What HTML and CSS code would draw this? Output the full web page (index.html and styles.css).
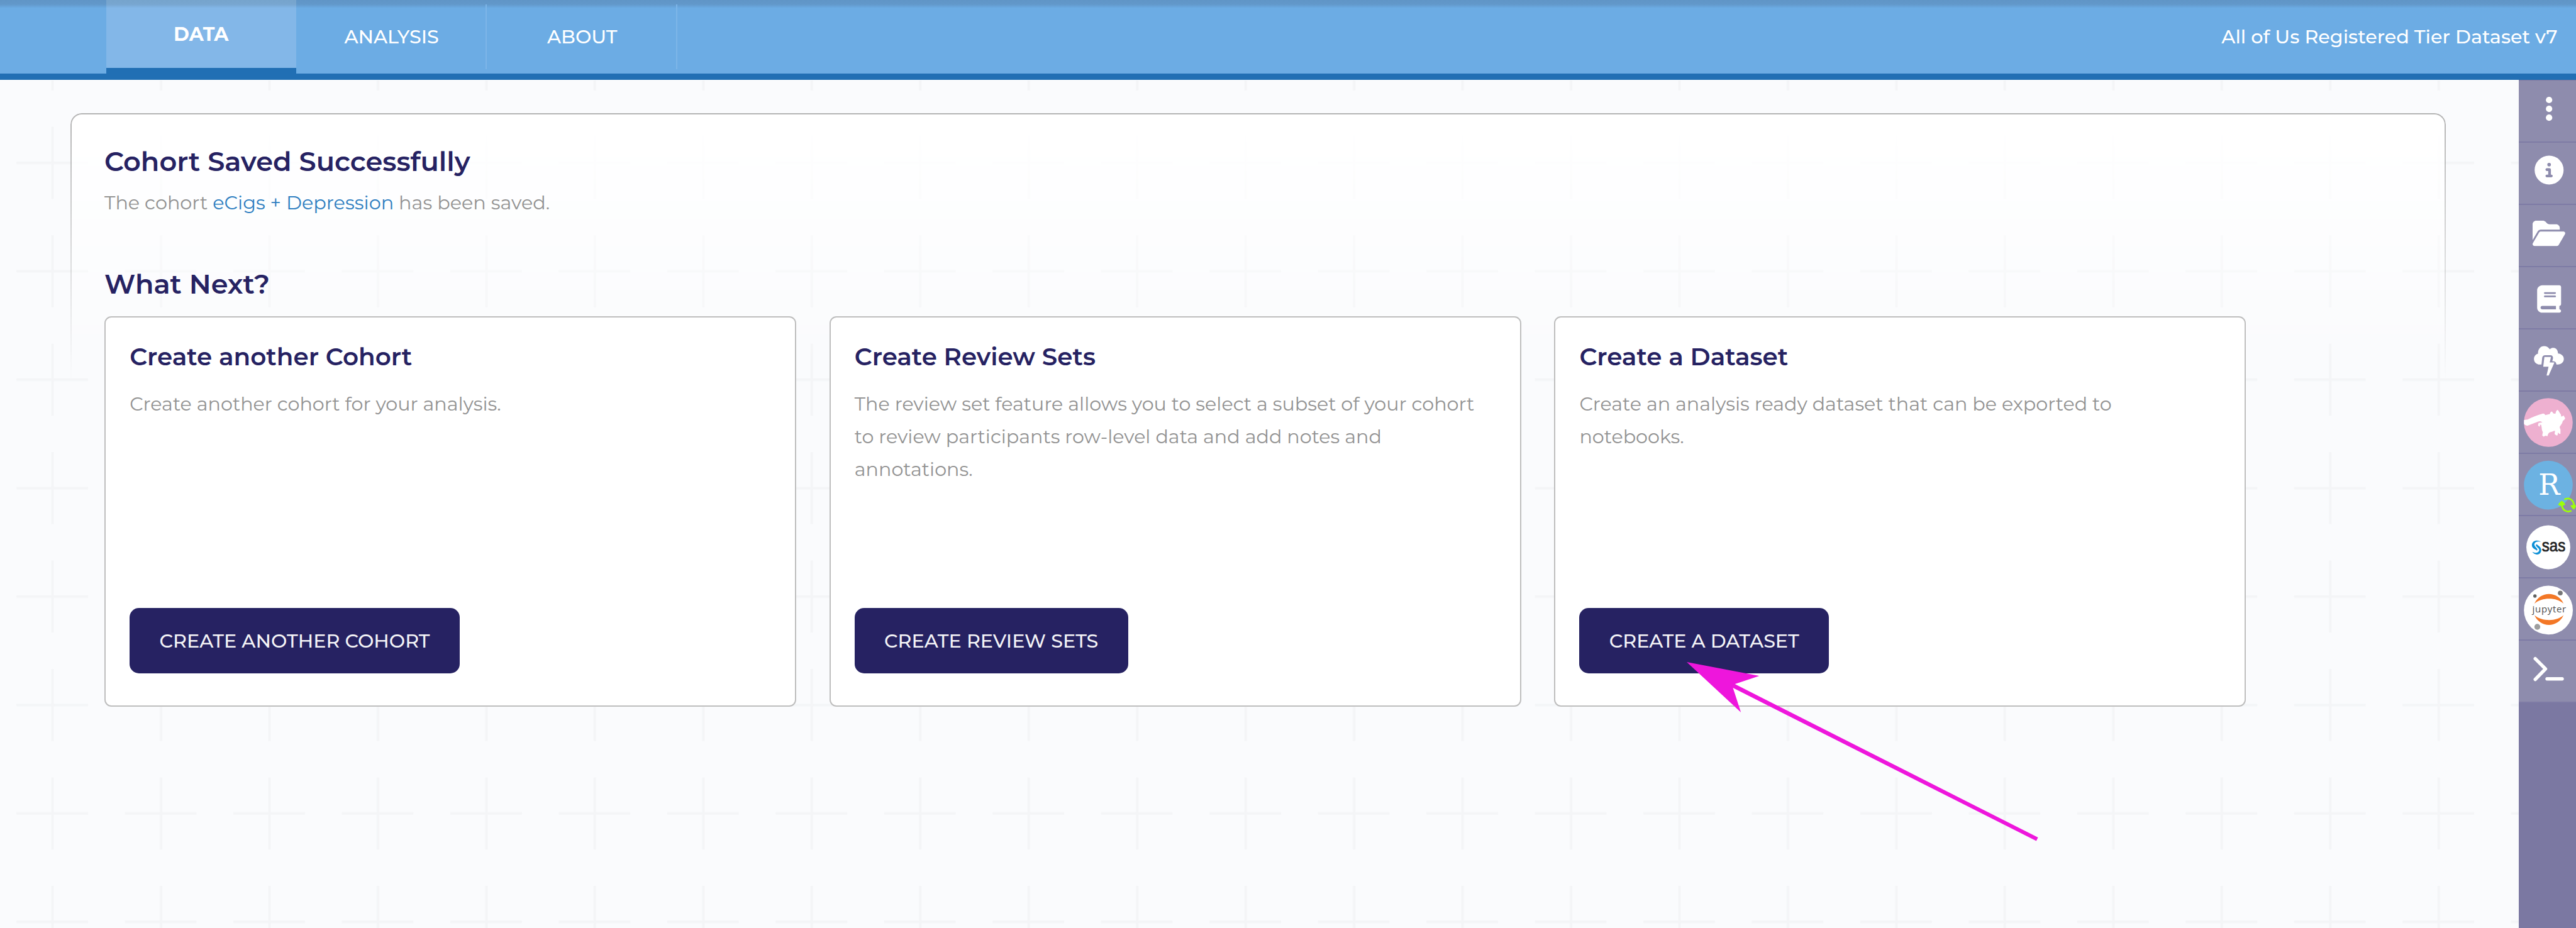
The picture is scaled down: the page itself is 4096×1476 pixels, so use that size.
FILE: index.html
```html
<!DOCTYPE html>
<html lang="en">
<head>
<meta charset="utf-8">
<title>Cohort Saved</title>
<link rel="stylesheet" href="styles.css">
</head>
<body>
<header class="topbar">
  <nav class="tabs">
    <a class="tab tab-active">DATA</a>
    <a class="tab">ANALYSIS</a>
    <a class="tab">ABOUT</a>
  </nav>
  <div class="dataset">All of Us Registered Tier Dataset v7</div>
</header>
<div class="body">
  <main class="main">
    <svg class="grid" width="100%" height="100%" aria-hidden="true">
      <defs>
        <pattern id="cross" x="-2.6" y="44.8" width="172.46" height="172.46" patternUnits="userSpaceOnUse">
          <path d="M86.2 29V143.5M28.6 86.2H142.6" stroke="#f4f5f7" stroke-width="4" fill="none"/>
        </pattern>
      </defs>
      <rect width="100%" height="100%" fill="url(#cross)"/>
    </svg>
    <section class="panel">
      <h1 class="heading">Cohort Saved Successfully</h1>
      <p class="saved">The cohort <a class="link">eCigs + Depression</a> has been saved.</p>
      <h2 class="heading next">What Next?</h2>
      <div class="cards">
        <article class="card">
          <h3 class="card-title">Create another Cohort</h3>
          <p class="card-text">Create another cohort for your analysis.</p>
          <button class="button">CREATE ANOTHER COHORT</button>
        </article>
        <article class="card">
          <h3 class="card-title">Create Review Sets</h3>
          <p class="card-text">The review set feature allows you to select a subset of your cohort<br>to review participants row-level data and add notes and<br>annotations.</p>
          <button class="button">CREATE REVIEW SETS</button>
        </article>
        <article class="card">
          <h3 class="card-title">Create a Dataset</h3>
          <p class="card-text">Create an analysis ready dataset that can be exported to<br>notebooks.</p>
          <button class="button">CREATE A DATASET</button>
        </article>
      </div>
    </section>
  </main>
  <aside class="sidebar">
    <div class="tool">
      <svg viewBox="0 0 91 97"><g fill="#fff"><circle cx="48.2" cy="31" r="5.1"/><circle cx="48.2" cy="45.1" r="5.1"/><circle cx="48.2" cy="59.2" r="5.1"/></g></svg>
    </div>
    <div class="tool">
      <svg viewBox="0 0 91 97"><path transform="translate(25.2 20.4) scale(.09)" fill="#fff" d="M256 512A256 256 0 1 0 256 0a256 256 0 1 0 0 512zM216 336h24V272H216c-13.3 0-24-10.7-24-24s10.7-24 24-24h48c13.3 0 24 10.7 24 24v88h8c13.3 0 24 10.7 24 24s-10.7 24-24 24H216c-13.3 0-24-10.7-24-24s10.7-24 24-24zm40-208a32 32 0 1 1 0 64 32 32 0 1 1 0-64z"/></svg>
    </div>
    <div class="tool">
      <svg viewBox="0 0 91 97"><path transform="translate(22 22) scale(.09)" fill="#fff" d="M88.700 223.800L0 375.800V96C0 60.700 28.700 32 64 32H181.500c17 0 33.300 6.700 45.300 18.700l26.500 26.500c12 12 28.300 18.700 45.300 18.700H416c35.300 0 64 28.700 64 64v32H144c-22.800 0-43.800 12.100-55.300 31.800zm27.600 16.100C122.100 230 132.600 224 144 224H544c11.500 0 22 6.100 27.700 16.100s5.700 22.200-.1 32.100l-112 192C453.900 474 443.400 480 432 480H32c-11.500 0-22-6.100-27.700-16.100s-5.700-22.200 .1-32.100l112-192z"/></svg>
    </div>
    <div class="tool">
      <svg viewBox="0 0 91 97"><path transform="translate(29.200 28.800) scale(.085)" fill="#fff" d="M96 0C43 0 0 43 0 96V416c0 53 43 96 96 96H384h32c17.700 0 32-14.300 32-32s-14.300-32-32-32V384c17.700 0 32-14.300 32-32V32c0-17.700-14.300-32-32-32H384 96zm0 384H352v64H96c-17.700 0-32-14.300-32-32s14.300-32 32-32zm32-240c0-8.800 7.200-16 16-16H336c8.800 0 16 7.200 16 16s-7.200 16-16 16H144c-8.800 0-16-7.200-16-16zm16 48H336c8.800 0 16 7.200 16 16s-7.200 16-16 16H144c-8.800 0-16-7.200-16-16s7.200-16 16-16z"/></svg>
    </div>
    <div class="tool">
      <svg viewBox="0 0 91 97"><g transform="translate(-9.500 -4.700) scale(.184)" fill="#fff"><path d="M248 329H232C204 329 183 307 183 281C183 258 198 240 218 235C215 199 238 169 270 169C291 169 309 179 320 197C328 188 339 185 352 185C374 185 389 204 391 234C420 236 441 255 441 281C441 309 420 329 377 329C376 311 367 301 349 300H341L347 277C350 260 342 248 326 248H280C264 248 255 257 254 271Z"/><path d="M273 263H330L319 311H360L310 424H292L309 347H263Z"/></g></svg>
    </div>
    <div class="tool">
      <svg viewBox="0 0 91 97"><g transform="translate(-9.500 -4.400) scale(.184)"><circle cx="307" cy="290" r="211" fill="#eeb0d0"/><path fill="#fff" d="M97 269L128 264C170 244 210 226 262 213C272 213 278 219 280 226L320 217C322 207 328 196 335 195C344 197 347 211 354 213L369 214C371 198 378 182 388 181C398 187 402 205 415 220L419 238C426 241 432 232 440 231L446 242L453 253C447 265 440 271 433 275C429 292 420 307 411 319C403 326 404 336 412 350L412 389L401 388L392 376L386 402H376L361 389L365 363C352 361 341 372 327 373C313 375 306 383 300 408L282 404L266 413L254 402L260 374C252 362 250 348 250 337L245 310L232 309L236 321L227 326L218 313L223 294L256 289C246 280 235 275 220 282L128 317C111 317 101 311 97 303Z"/></g></svg>
    </div>
    <div class="tool">
      <svg viewBox="0 0 91 97"><g transform="translate(-9.500 1.400) scale(.184)"><circle cx="307" cy="262" r="211" fill="#6cb2e2"/><text class="r-mark" x="222" y="346" textLength="186" lengthAdjust="spacingAndGlyphs">R</text><g fill="none" stroke="#9dff0a" stroke-width="15"><path d="M445 386C484 365 524 386 530 438"/><path d="M507 483C468 502 428 480 422 430"/></g><path fill="#9dff0a" d="M391 430Q408 406 423 396Q439 404 454 430L438 439H402ZM497 438Q512 430 546 436V446Q540 460 528 473Q510 462 497 438Z"/></g></svg>
    </div>
    <div class="tool">
      <svg viewBox="0 0 91 97"><g transform="translate(-9.500 -3.700) scale(.184)"><circle cx="307" cy="289" r="190" fill="#fff"/><g fill="#0b8fd6"><path d="M243 242C214 220 166 231 165 270C165 303 199 304 207 317C213 316 215 309 210 302C196 284 181 274 188 257C196 239 221 236 243 242Z"/><path d="M168 329C190 362 244 360 246 314C246 286 220 275 207 263C199 262 197 271 203 279C217 296 232 301 228 318C221 339 193 341 168 329Z"/></g><text class="sas-mark" x="252" y="327" textLength="203" lengthAdjust="spacingAndGlyphs">sas</text></g></svg>
    </div>
    <div class="tool">
      <svg viewBox="0 0 91 97"><circle cx="47.100" cy="50.400" r="38.900" fill="#fff"/><path fill="#f37726" d="M24.900 40C34 19.500 62 19.500 71.200 40C60 29.700 37 29.700 24.900 40ZM24.900 58.500C34 79 62 79 71.200 58.500C60 68.800 37 68.800 24.900 58.500Z"/><circle cx="25.700" cy="28" r="2.700" fill="#616262"/><circle cx="66" cy="23.200" r="3.800" fill="#767677"/><circle cx="29.500" cy="77" r="4.700" fill="#9e9e9e"/><text class="jupyter-mark" x="21.600" y="53.700" textLength="53.500" lengthAdjust="spacing">jupyter</text></svg>
    </div>
    <div class="tool">
      <svg viewBox="0 0 91 97"><path d="M26.200 28.700L42.500 44.800L26.200 61.600M45 60.800H69" fill="none" stroke="#fff" stroke-width="5.400" stroke-linecap="round" stroke-linejoin="round"/></svg>
    </div>
  </aside>
</div>
<svg class="pointer" viewBox="0 0 560 286" aria-hidden="true"><path fill="#ee16dc" d="M0 0L115.400 22.100L76.600 35L558.600 279.100L555.800 284.500L73.500 41L86.200 79.900Z"/></svg>
</body>
</html>
```
FILE: styles.css
```css
* { box-sizing: border-box; margin: 0; padding: 0; }

body {
  width: 4096px;
  height: 1476px;
  overflow: hidden;
  position: relative;
  font-family: Montserrat, Inter, sans-serif;
  font-size: 30.2px;
  background: #fafbfd;
}

.topbar {
  height: 127px;
  display: flex;
  justify-content: space-between;
  border-bottom: 10px solid #216fb4;
  background: linear-gradient(#6095c6 0, #6298ca 7px, #6cace4 13px);
  color: #fff;
  font-weight: 500;
}

.tabs { display: flex; padding-left: 168.5px; }

.tab {
  width: 303.2px;
  height: 117px;
  line-height: 117px;
  text-align: center;
  background: linear-gradient(#7db5e8, #7db5e8) right 7px / 2px 103px no-repeat;
}
.tab-active {
  width: 302.5px;
  font-weight: 700;
  line-height: 109px;
  border-bottom: 9px solid #216fb4;
  background: linear-gradient(#76a4cc 0, #78a6d0 7px, #83b7e8 13px);
}

.dataset { padding-right: 29.5px; line-height: 117px; }

.body { display: flex; height: 1349px; }

.main { flex: 1; position: relative; padding: 52.5px 0 0 112px; }
.grid { position: absolute; inset: .5px 0 0; }

.panel {
  position: relative;
  width: 3777px;
  padding: 52px 0 0 54px;
}
.panel::before {
  content: "";
  position: absolute;
  inset: 0 0 auto 0;
  height: 420px;
  border: 2px solid #b4b4b4;
  border-bottom: 0;
  border-radius: 18px 18px 0 0;
  background: #fff;
  mask-image: linear-gradient(#000, transparent);
}
.panel > * { position: relative; }

.heading {
  font-size: 43.1px;
  line-height: 50px;
  font-weight: 600;
  color: #262262;
}
.saved {
  margin-top: 15.3px;
  font-size: 30.3px;
  line-height: 52px;
  color: #939393;
}
.link { color: #2f7fc1; }
.next { margin-top: 78.4px; }

.cards { display: flex; gap: 52.6px; margin-top: 26.3px; }
.card {
  width: 1100px;
  height: 621px;
  display: flex;
  flex-direction: column;
  align-items: flex-start;
  padding: 40px 36px 51.5px 38.2px;
  border: 2px solid #bebebe;
  border-radius: 11px;
  background: #fff;
}
.card-title {
  font-size: 38.9px;
  line-height: 44px;
  font-weight: 600;
  color: #262262;
}
.card-text {
  margin-top: 28px;
  line-height: 51.8px;
  white-space: nowrap;
  color: #939393;
}

.button {
  margin-top: auto;
  height: 103.5px;
  padding: 0 47.3px;
  border: 0;
  border-radius: 15px;
  background: #262262;
  color: #f4f4f7;
  font: 500 30.2px Montserrat, Inter, sans-serif;
}

.sidebar { width: 91.3px; padding-top: .5px; background: #7b78a2; }
.tool { height: 99px; border-bottom: 2px solid #7e7ba5; background: #8e8cad; }
.tool svg { display: block; width: 91px; height: 97px; }

.r-mark { font: 256px "DejaVu Serif", serif; fill: #fff; }
.sas-mark { font: 152px "Liberation Sans", sans-serif; fill: #222; stroke: #222; stroke-width: 4; }
.jupyter-mark { font: 15px "Open Sans", sans-serif; fill: #4e4e4e; }

.pointer { position: absolute; left: 2681.6px; top: 1052.7px; width: 560px; height: 286px; }
```
